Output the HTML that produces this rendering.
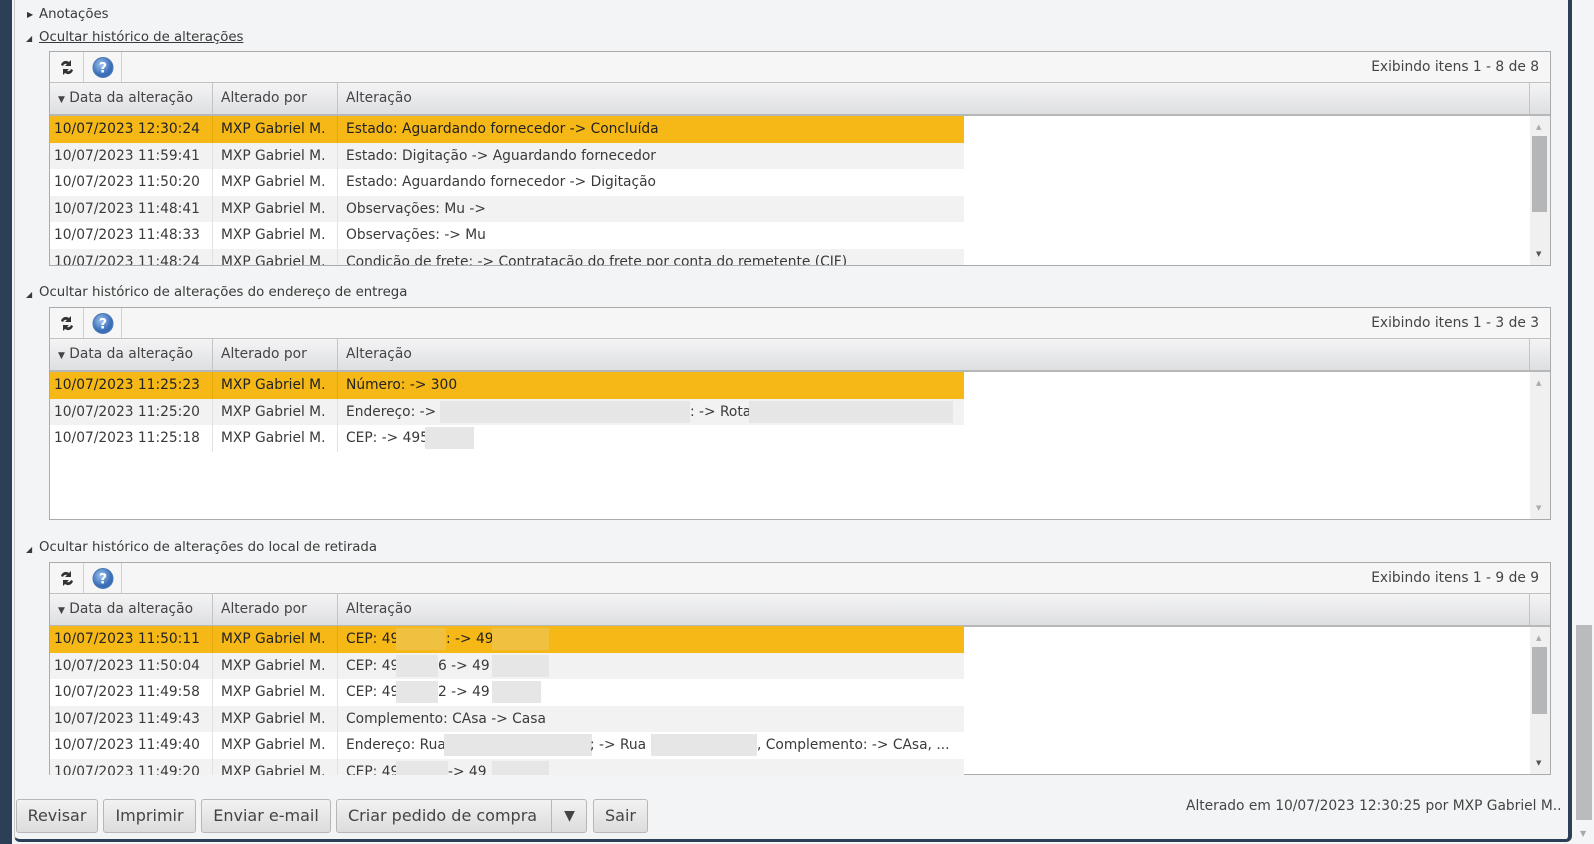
<!DOCTYPE html>
<html><head><meta charset="utf-8"><style>
*{margin:0;padding:0;box-sizing:border-box}
body{width:1594px;height:844px;overflow:hidden;background:#f4f5f6;font-family:"DejaVu Sans","Liberation Sans",sans-serif;font-size:13.8px;color:#3a3a3a;position:relative}
.abs{position:absolute}
.lbar{left:0;top:0;width:12px;height:844px;background:#2b3f57}
.panel{left:14px;top:-4px;width:1558px;height:846px;background:#f3f4f5;border:1px solid #c8c8c8;border-right:4px solid #2b3f57;border-bottom:3px solid #2b3f57;border-radius:0 0 6px 6px}
.t{white-space:nowrap;line-height:16px}
.grid{left:49px;width:1502px;border:1px solid #a9abad;background:#fff}
.tb{position:absolute;left:0;top:0;right:0;height:31px;background:#f6f6f6;border-bottom:1px solid #bfc1c3}
.ic{position:absolute;top:0;height:30px;border-right:1px solid #cfd0d2}
.hd{position:absolute;left:0;top:31px;right:0;height:33px;background:linear-gradient(#f4f4f5,#dedfe1);border-bottom:2px solid #b5b7b9}
.hc{position:absolute;top:0;height:31px;border-right:1px solid #c2c4c6;line-height:31px;color:#444;padding-left:8px;white-space:nowrap}
.row{position:absolute;left:0;width:914px;height:26.5px;line-height:26.5px;white-space:nowrap;overflow:hidden}
.row span{position:absolute;top:0;height:26.5px;border-right:1px solid #e2e2e2;padding-left:4px}
.c1{left:0;width:163px}.c2{left:163px;width:125px;padding-left:8px!important}.c3{left:288px;width:626px;border:none!important;padding-left:8px!important}
.hl{background:#f5b817;color:#222}.hl span{border-color:#e7a90c!important}
.alt{background:#f2f2f2}
.sb{position:absolute;right:0;top:64px;width:20px;bottom:0;background:#f0f0f0}
.blur{position:absolute;background:#e6e6e6;height:22px;top:2px}
.row b{position:absolute;font-weight:normal}
.btn{position:absolute;top:799px;height:34px;border:1px solid #b5b7b9;border-radius:3px;background:linear-gradient(#f2f2f2,#dcdcdc);font-size:16px;line-height:32px;text-align:center;color:#444}
</style></head><body>
<div class="abs lbar"></div>
<div class="abs panel"></div>

<div class="abs t" style="left:27px;top:7px;font-size:8px;color:#333">&#9654;</div>
<div class="abs t" style="left:39px;top:7px;font-size:13.3px">Anotações</div>
<div class="abs t" style="left:26px;top:31px;font-size:8px">&#9698;</div>
<div class="abs t" style="left:39px;top:30px;font-size:13.3px;text-decoration:underline">Ocultar histórico de alterações</div>

<svg width="0" height="0" style="position:absolute"><defs><radialGradient id="g" cx=".4" cy=".35"><stop offset="0" stop-color="#9cc3ef"/><stop offset="1" stop-color="#3a6fb8"/></radialGradient></defs></svg>

<!-- grid 1 -->
<div class="abs grid" style="top:51px;height:215px">
 <div class="tb"><div class="ic" style="left:0;width:34px"><svg width="34" height="30"><path d="M11 13a5 5 0 0 1 8-3l2-2v6h-6l2-2a3 3 0 0 0-4 2z M23 18a5 5 0 0 1-8 3l-2 2v-6h6l-2 2a3 3 0 0 0 4-2z" fill="#333"/></svg></div>
 <div class="ic" style="left:34px;width:38px"><svg width="38" height="30"><circle cx="19" cy="15.5" r="10" fill="url(#g)" stroke="#4a78b8"/><text x="19" y="20.5" font-size="14" font-weight="bold" fill="#fff" text-anchor="middle" font-family="DejaVu Sans">?</text></svg></div>
 <div class="abs t" style="right:11px;top:7px;color:#444">Exibindo itens 1 - 8 de 8</div></div>
 <div class="hd"><div class="hc" style="left:0;width:163px"><span style="font-size:9px">&#9660;</span> Data da alteração</div><div class="hc" style="left:163px;width:125px">Alterado por</div><div class="hc" style="left:288px;width:1192px">Alteração</div></div>
 <div class="row hl" style="top:64px"><span class="c1">10/07/2023 12:30:24</span><span class="c2">MXP Gabriel M.</span><span class="c3">Estado: Aguardando fornecedor -&gt; Concluída</span></div>
 <div class="row alt" style="top:90.5px"><span class="c1">10/07/2023 11:59:41</span><span class="c2">MXP Gabriel M.</span><span class="c3">Estado: Digitação -&gt; Aguardando fornecedor</span></div>
 <div class="row" style="top:117px"><span class="c1">10/07/2023 11:50:20</span><span class="c2">MXP Gabriel M.</span><span class="c3">Estado: Aguardando fornecedor -&gt; Digitação</span></div>
 <div class="row alt" style="top:143.5px"><span class="c1">10/07/2023 11:48:41</span><span class="c2">MXP Gabriel M.</span><span class="c3">Observações: Mu -&gt;</span></div>
 <div class="row" style="top:170px"><span class="c1">10/07/2023 11:48:33</span><span class="c2">MXP Gabriel M.</span><span class="c3">Observações: -&gt; Mu</span></div>
 <div class="row alt" style="top:196.5px;height:16.5px"><span class="c1">10/07/2023 11:48:24</span><span class="c2">MXP Gabriel M.</span><span class="c3">Condição de frete: -&gt; Contratação do frete por conta do remetente (CIF)</span></div>
 <div class="sb"><div class="abs t" style="left:6px;top:3px;font-size:7px;color:#aaa">&#9650;</div><div class="abs" style="left:2px;top:20px;width:15px;height:76px;background:#b4b6b8"></div><div class="abs t" style="left:6px;top:130px;font-size:7px;color:#555">&#9660;</div></div>
</div>

<div class="abs t" style="left:26px;top:287px;font-size:8px">&#9698;</div>
<div class="abs t" style="left:39px;top:285px;font-size:13.3px">Ocultar histórico de alterações do endereço de entrega</div>

<!-- grid 2 -->
<div class="abs grid" style="top:307px;height:213px">
 <div class="tb"><div class="ic" style="left:0;width:34px"><svg width="34" height="30"><path d="M11 13a5 5 0 0 1 8-3l2-2v6h-6l2-2a3 3 0 0 0-4 2z M23 18a5 5 0 0 1-8 3l-2 2v-6h6l-2 2a3 3 0 0 0 4-2z" fill="#333"/></svg></div>
 <div class="ic" style="left:34px;width:38px"><svg width="38" height="30"><circle cx="19" cy="15.5" r="10" fill="url(#g)" stroke="#4a78b8"/><text x="19" y="20.5" font-size="14" font-weight="bold" fill="#fff" text-anchor="middle" font-family="DejaVu Sans">?</text></svg></div>
 <div class="abs t" style="right:11px;top:7px;color:#444">Exibindo itens 1 - 3 de 3</div></div>
 <div class="hd"><div class="hc" style="left:0;width:163px"><span style="font-size:9px">&#9660;</span> Data da alteração</div><div class="hc" style="left:163px;width:125px">Alterado por</div><div class="hc" style="left:288px;width:1192px">Alteração</div></div>
 <div class="row hl" style="top:64px"><span class="c1">10/07/2023 11:25:23</span><span class="c2">MXP Gabriel M.</span><span class="c3">Número: -&gt; 300</span></div>
 <div class="row alt" style="top:90.5px"><span class="c1">10/07/2023 11:25:20</span><span class="c2">MXP Gabriel M.</span><span class="c3">Endereço: -&gt;<i class="blur" style="left:102px;width:250px"></i><b style="left:352px">: -&gt; Rota</b><i class="blur" style="left:411px;width:204px"></i></span></div>
 <div class="row" style="top:117px"><span class="c1">10/07/2023 11:25:18</span><span class="c2">MXP Gabriel M.</span><span class="c3">CEP: -&gt; 495<i class="blur" style="left:87px;width:49px"></i></span></div>
 <div class="sb"><div class="abs t" style="left:6px;top:3px;font-size:7px;color:#aaa">&#9650;</div><div class="abs t" style="left:6px;top:128px;font-size:7px;color:#aaa">&#9660;</div></div>
</div>

<div class="abs t" style="left:26px;top:542px;font-size:8px">&#9698;</div>
<div class="abs t" style="left:39px;top:540px;font-size:13.3px">Ocultar histórico de alterações do local de retirada</div>

<!-- grid 3 -->
<div class="abs grid" style="top:562px;height:213px">
 <div class="tb"><div class="ic" style="left:0;width:34px"><svg width="34" height="30"><path d="M11 13a5 5 0 0 1 8-3l2-2v6h-6l2-2a3 3 0 0 0-4 2z M23 18a5 5 0 0 1-8 3l-2 2v-6h6l-2 2a3 3 0 0 0 4-2z" fill="#333"/></svg></div>
 <div class="ic" style="left:34px;width:38px"><svg width="38" height="30"><circle cx="19" cy="15.5" r="10" fill="url(#g)" stroke="#4a78b8"/><text x="19" y="20.5" font-size="14" font-weight="bold" fill="#fff" text-anchor="middle" font-family="DejaVu Sans">?</text></svg></div>
 <div class="abs t" style="right:11px;top:7px;color:#444">Exibindo itens 1 - 9 de 9</div></div>
 <div class="hd"><div class="hc" style="left:0;width:163px"><span style="font-size:9px">&#9660;</span> Data da alteração</div><div class="hc" style="left:163px;width:125px">Alterado por</div><div class="hc" style="left:288px;width:1192px">Alteração</div></div>
 <div class="row hl" style="top:63px"><span class="c1">10/07/2023 11:50:11</span><span class="c2">MXP Gabriel M.</span><span class="c3">CEP: 49<i class="blur" style="left:58px;width:50px;background:#f0c040"></i><b style="left:108px">: -&gt; 49</b><i class="blur" style="left:154px;width:57px;background:#f0c040"></i></span></div>
 <div class="row alt" style="top:89.5px"><span class="c1">10/07/2023 11:50:04</span><span class="c2">MXP Gabriel M.</span><span class="c3">CEP: 49<i class="blur" style="left:58px;width:42px"></i><b style="left:100px">6 -&gt; 49</b><i class="blur" style="left:154px;width:57px"></i></span></div>
 <div class="row" style="top:116px"><span class="c1">10/07/2023 11:49:58</span><span class="c2">MXP Gabriel M.</span><span class="c3">CEP: 49<i class="blur" style="left:58px;width:42px"></i><b style="left:100px">2 -&gt; 49</b><i class="blur" style="left:154px;width:49px"></i></span></div>
 <div class="row alt" style="top:142.5px"><span class="c1">10/07/2023 11:49:43</span><span class="c2">MXP Gabriel M.</span><span class="c3">Complemento: CAsa -&gt; Casa</span></div>
 <div class="row" style="top:169px"><span class="c1">10/07/2023 11:49:40</span><span class="c2">MXP Gabriel M.</span><span class="c3">Endereço: Rua<i class="blur" style="left:106px;width:148px"></i><b style="left:252px">; -&gt; Rua</b><i class="blur" style="left:313px;width:106px"></i><b style="left:419px">, Complemento: -&gt; CAsa, ...</b></span></div>
 <div class="row alt" style="top:195.5px;height:16px"><span class="c1">10/07/2023 11:49:20</span><span class="c2">MXP Gabriel M.</span><span class="c3">CEP: 49<i class="blur" style="left:58px;width:52px"></i><b style="left:110px"> -&gt; 49</b><i class="blur" style="left:154px;width:57px"></i></span></div>
 <div class="sb"><div class="abs t" style="left:6px;top:3px;font-size:7px;color:#aaa">&#9650;</div><div class="abs" style="left:2px;top:20px;width:15px;height:67px;background:#b4b6b8"></div><div class="abs t" style="left:6px;top:128px;font-size:7px;color:#555">&#9660;</div></div>
</div>

<div class="btn" style="left:16px;width:82px">Revisar</div>
<div class="btn" style="left:103px;width:93px">Imprimir</div>
<div class="btn" style="left:201px;width:130px">Enviar e-mail</div>
<div class="btn" style="left:336px;width:251px;text-align:left;padding-left:11px">Criar pedido de compra<span style="position:absolute;left:214px;top:0;width:36px;height:32px;border-left:1px solid #b5b7b9;text-align:center;font-size:14px">&#9660;</span></div>
<div class="btn" style="left:593px;width:55px">Sair</div>
<div class="abs t" style="left:1186px;top:798px;color:#444">Alterado em 10/07/2023 12:30:25 por MXP Gabriel M..</div>

<div class="abs" style="left:1576px;top:625px;width:16px;height:195px;background:#b9bbbd"></div>
<div class="abs t" style="left:1580px;top:826px;font-size:8px;color:#aaa">&#9660;</div>
</body></html>
